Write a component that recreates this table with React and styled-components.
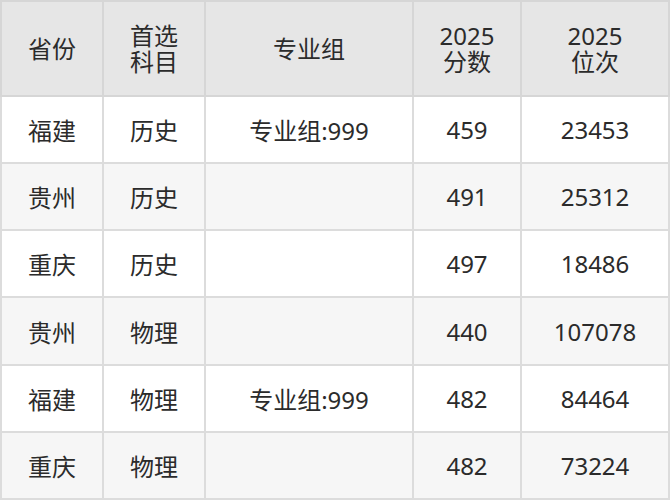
import React from 'react'
import styled, { createGlobalStyle } from 'styled-components'

const GlobalStyle = createGlobalStyle`
  html, body {
    margin: 0;
    padding: 0;
    background: #fff;
  }
`

const rows = [
  { prov: '福建', subj: '历史', group: '专业组:999', score: '459', rank: '23453' },
  { prov: '贵州', subj: '历史', group: '', score: '491', rank: '25312' },
  { prov: '重庆', subj: '历史', group: '', score: '497', rank: '18486' },
  { prov: '贵州', subj: '物理', group: '', score: '440', rank: '107078' },
  { prov: '福建', subj: '物理', group: '专业组:999', score: '482', rank: '84464' },
  { prov: '重庆', subj: '物理', group: '', score: '482', rank: '73224' },
]

export default function App() {
  return (
    <>
      <GlobalStyle />
      <Table>
        <colgroup>
          <col style={{ width: 102 }} />
          <col style={{ width: 102 }} />
          <col style={{ width: 208 }} />
          <col style={{ width: 108 }} />
          <col />
        </colgroup>
        <thead>
          <tr>
            <Th>省份</Th>
            <Th>首选<br />科目</Th>
            <Th>专业组</Th>
            <Th>2025<br />分数</Th>
            <Th>2025<br />位次</Th>
          </tr>
        </thead>
        <tbody>
          {rows.map((r, i) => (
            <Row key={i} $alt={i % 2 === 1}>
              <Td>{r.prov}</Td>
              <Td>{r.subj}</Td>
              <Td>{r.group}</Td>
              <Td>{r.score}</Td>
              <Td>{r.rank}</Td>
            </Row>
          ))}
        </tbody>
      </Table>
    </>
  )
}

const Table = styled.table`
  width: 670px;
  height: 500px;
  border-collapse: collapse;
  table-layout: fixed;
  font-family: "Noto Sans", "Noto Sans CJK SC", sans-serif;
  color: #2b2b2b;
  font-size: 24px;
`

const Th = styled.th`
  height: 93px;
  background: #e6e6e6;
  border: 2px solid #d6d6d6;
  font-weight: 400;
  line-height: 26px;
  text-align: center;
  vertical-align: middle;
  padding: 0;
`

const Row = styled.tr`
  background: ${p => (p.$alt ? '#f6f6f6' : '#fff')};
`

const Td = styled.td`
  height: 63px;
  border: 2px solid #dcdcdc;
  text-align: center;
  vertical-align: middle;
  padding: 0;
`
